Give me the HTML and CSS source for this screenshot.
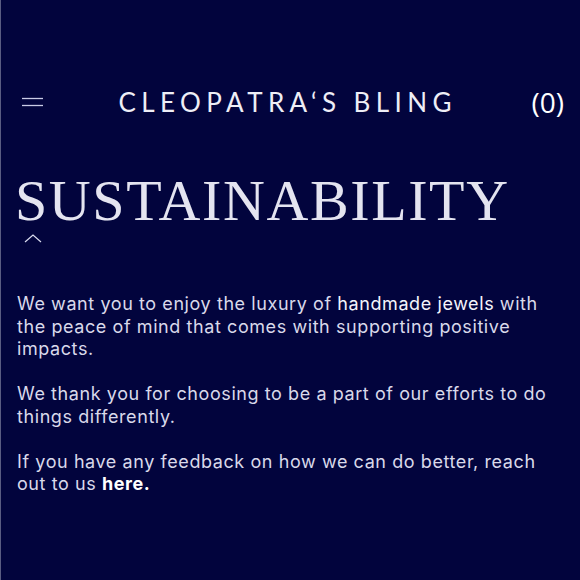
FILE: index.html
```html
<!DOCTYPE html>
<html>
<head>
<meta charset="utf-8">
<link rel="stylesheet" href="styles.css">
</head>
<body>
<div class="page">
  <header class="header">
    <button class="menu" aria-label="Menu">
      <svg width="22" height="10" viewBox="0 0 22 10"><line x1="0" y1="1.5" x2="21" y2="1.5" stroke="#c9cbe6" stroke-width="1.3"/><line x1="0" y1="8.5" x2="21" y2="8.5" stroke="#c9cbe6" stroke-width="1.3"/></svg>
    </button>
    <div class="brand">CLEOPATRA‘S BLING</div>
    <div class="cart">(0)</div>
  </header>
  <main class="content">
    <h1 class="title">SUSTAINABILITY</h1>
    <div class="chev">
      <svg width="18" height="10" viewBox="0 0 18 10"><polyline points="1,9 9,2 17,9" fill="none" stroke="#d9dbee" stroke-width="1.2"/></svg>
    </div>
    <p class="para">We want you to enjoy the luxury of <span class="hl">handmade jewels</span> with the peace of mind that comes with supporting positive impacts.</p>
    <p class="para">We thank you for choosing to be a part of our efforts to do things differently.</p>
    <p class="para">If you have any feedback on how we can do better, reach out to us <a class="link" href="#">here.</a></p>
  </main>
</div>
</body>
</html>
```

FILE: styles.css
```css
html, body {
  margin: 0;
  padding: 0;
  background: #02043d;
}
.page {
  width: 580px;
  height: 580px;
  box-sizing: border-box;
  border-left: 1px solid #5a5c82;
  background: #02043d;
  color: #dcdcec;
  overflow: hidden;
}
.header {
  display: flex;
  align-items: center;
  height: 44px;
  margin-top: 80px;
  padding: 0 16px 0 21px;
}
.menu {
  background: none;
  border: 0;
  padding: 0;
  width: 22px;
  height: 10px;
  display: flex;
}
.brand {
  flex: 1;
  text-align: center;
  font-family: Lato, "Open Sans", sans-serif;
  font-weight: 400;
  font-size: 26px;
  letter-spacing: 5.4px;
  color: #eeeef6;
}
.cart {
  font-family: "Open Sans", "Noto Sans", sans-serif;
  font-weight: 500;
  font-size: 28px;
  color: #ffffff;
}
.content {
  padding: 0 14px;
}
.title {
  margin: 48px 0 0 0;
  font-family: "Liberation Serif", "DejaVu Serif", serif;
  font-weight: 400;
  font-size: 58px;
  line-height: 1;
  letter-spacing: 1.6px;
  color: #e4e4f0;
}
.chev {
  display: flex;
  padding-left: 9px;
  margin-top: 3px;
  height: 10px;
}
.para {
  margin: 50px 0 0 2px;
  font-family: Inter, "Noto Sans", sans-serif;
  font-size: 18px;
  line-height: 22.5px;
  letter-spacing: 0.58px;
  color: #d9d9ea;
}
.para + .para {
  margin-top: 22.5px;
}
.hl {
  color: #f4f4fb;
}
.link {
  color: #ffffff;
  font-weight: 700;
  text-decoration: none;
}
```
